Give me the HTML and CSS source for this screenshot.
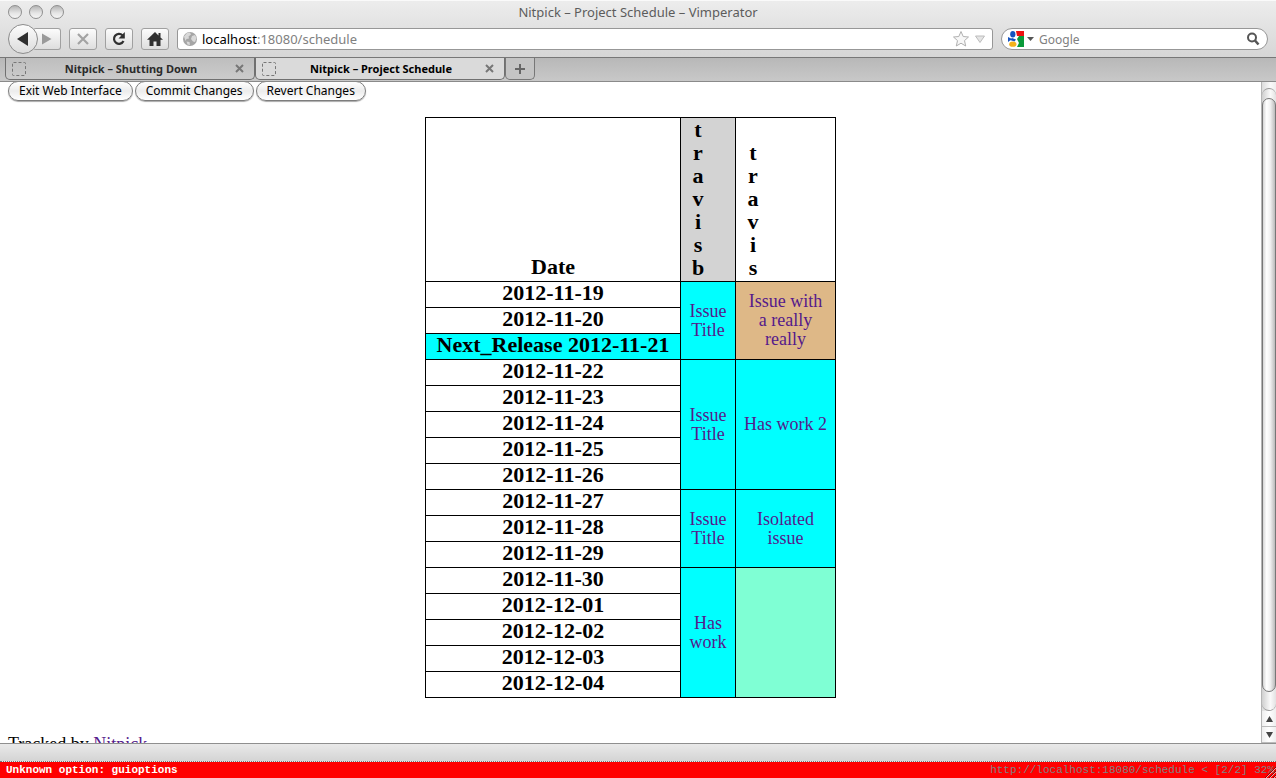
FILE: index.html
```html
<!DOCTYPE html>
<html lang="en">
<head>
<meta charset="utf-8">
<title>Nitpick – Project Schedule</title>
<link rel="stylesheet" href="styles.css">
</head>
<body>
<header class="chrome">
  <div class="titlebar">
    <div class="lights">
      <button class="light" aria-label="Close window"></button>
      <button class="light" aria-label="Minimize window"></button>
      <button class="light" aria-label="Zoom window"></button>
    </div>
    <div class="window-title">Nitpick – Project Schedule – Vimperator</div>
  </div>
  <div class="toolbar">
    <div class="history">
      <button class="back" aria-label="Back"><svg width="14" height="16" viewBox="0 0 14 16"><path d="M1 8 12 1v14z" fill="#2e2e2e"/></svg></button>
      <button class="tool forward" aria-label="Forward"><svg width="10" height="12" viewBox="0 0 10 12"><path d="M9.500 6 0 .500v11z" fill="#9a9a9a"/></svg></button>
    </div>
    <button class="tool" aria-label="Stop"><svg width="14" height="14" viewBox="0 0 14 14"><path d="M2 2l10 10M12 2 2 12" stroke="#a3a3a3" stroke-width="2.200" fill="none"/></svg></button>
    <button class="tool" aria-label="Reload"><svg width="16" height="16" viewBox="0 0 16 16"><path d="M11.500 4.200A5 5 0 1 0 12.500 10" stroke="#303030" stroke-width="2.200" fill="none"/><path d="M13.800 1v6.500H7.500z" fill="#303030"/></svg></button>
    <button class="tool" aria-label="Home"><svg width="18" height="16" viewBox="0 0 18 16"><path d="M9 1 1 8.800h2.500V15h4v-4.500h3V15h4V8.800H17L14.500 6.400V2h-2v2.400z" fill="#303030"/></svg></button>
    <div class="location">
      <svg width="16" height="16" viewBox="0 0 16 16"><circle cx="8" cy="8" r="7" fill="#a5a5a5"/><path d="M2 5.500 5 2l3-.5 1 2-2.500 2 .5 2-2.500.5-1 2zM10 5l3-1 1.500 3-1.500 4-2-.5L9 8zM4.500 10.500l3 .5.5 3-2.500-.5z" fill="#d9d9d9"/></svg>
      <div class="url" role="textbox" aria-label="Location" contenteditable="true" spellcheck="false">localhost<span class="path">:18080/schedule</span></div>
      <button class="bare" aria-label="Bookmark this page"><svg width="18" height="18" viewBox="0 0 18 18"><path d="M9 1.500l2.200 5 5.300.5-4 3.600 1.200 5.400L9 13.200 4.300 16l1.200-5.400-4-3.600 5.300-.5z" fill="#f7f7f7" stroke="#b0b0b0"/></svg></button>
      <button class="bare" aria-label="Show history"><svg width="12" height="10" viewBox="0 0 12 10"><path d="M1.500 2h9L6 8.500z" fill="#e5e5e5" stroke="#bcbcbc"/></svg></button>
    </div>
    <div class="search">
      <button class="bare engine" aria-label="Choose search engine">
        <svg width="16" height="16" viewBox="0 0 16 16"><path d="M0 0h16v16H0z" fill="#fff"/><path d="M8 0h8v5H9z" fill="#e11"/><path d="M11 5h5v11H9l2-4-2-4z" fill="#0a9a3a"/><path d="M0 6l4 2-4 3z" fill="#1553c0"/><ellipse cx="4.800" cy="3.200" rx="2.600" ry="3.200" fill="#1553c0"/><path d="M4 7l4 1.500-1.500 2L2 9z" fill="#1553c0"/><ellipse cx="4.800" cy="13.200" rx="3.600" ry="2.600" fill="#f5b21a"/></svg>
        <svg width="7" height="5" viewBox="0 0 7 5"><path d="M0 0h7L3.500 4z" fill="#555"/></svg>
      </button>
      <input class="query" type="text" placeholder="Google" aria-label="Search with Google">
      <button class="bare" aria-label="Search"><svg width="14" height="14" viewBox="0 0 14 14"><circle cx="6" cy="5.500" r="4" fill="none" stroke="#555" stroke-width="2"/><path d="M9 8.500l3.500 4" stroke="#555" stroke-width="2.500"/></svg></button>
    </div>
  </div>
  <nav class="tabs" aria-label="Tabs">
    <div class="tab">
      <svg width="16" height="16" viewBox="0 0 16 16"><rect x="1.500" y="1.500" width="13" height="13" rx="1" fill="none" stroke="#777" stroke-dasharray="3 2"/></svg>
      <a class="tab-label" href="#">Nitpick – Shutting Down</a>
      <button class="bare" aria-label="Close tab"><svg width="9" height="9" viewBox="0 0 9 9"><path d="M1 1l7 7M8 1 1 8" stroke="#777" stroke-width="2"/></svg></button>
    </div>
    <div class="tab active">
      <svg width="16" height="16" viewBox="0 0 16 16"><rect x="1.500" y="1.500" width="13" height="13" rx="1" fill="none" stroke="#777" stroke-dasharray="3 2"/></svg>
      <a class="tab-label" href="#">Nitpick – Project Schedule</a>
      <button class="bare" aria-label="Close tab"><svg width="9" height="9" viewBox="0 0 9 9"><path d="M1 1l7 7M8 1 1 8" stroke="#777" stroke-width="2"/></svg></button>
    </div>
    <button class="new-tab" aria-label="New tab"><svg width="12" height="12" viewBox="0 0 12 12"><path d="M6 1v10M1 6h10" stroke="#666" stroke-width="2"/></svg></button>
  </nav>
</header>

<div class="viewport">
  <main class="page">
    <div class="actions">
      <button class="action">Exit Web Interface</button>
      <button class="action">Commit Changes</button>
      <button class="action">Revert Changes</button>
    </div>
    <table class="schedule">
      <thead>
        <tr><th class="date">Date</th><th class="user current"><span>t<br>r<br>a<br>v<br>i<br>s<br>b</span></th><th class="user wide"><span>t<br>r<br>a<br>v<br>i<br>s</span></th></tr>
      </thead>
      <tbody>
        <tr><th>2012-11-19</th><td class="work" rowspan="3"><a href="#">Issue Title</a></td><td class="late" rowspan="3"><a href="#">Issue with a really really</a></td></tr>
        <tr><th>2012-11-20</th></tr>
        <tr><th class="release">Next_Release 2012-11-21</th></tr>
        <tr><th>2012-11-22</th><td class="work" rowspan="5"><a href="#">Issue Title</a></td><td class="work" rowspan="5"><a href="#">Has work 2</a></td></tr>
        <tr><th>2012-11-23</th></tr>
        <tr><th>2012-11-24</th></tr>
        <tr><th>2012-11-25</th></tr>
        <tr><th>2012-11-26</th></tr>
        <tr><th>2012-11-27</th><td class="work" rowspan="3"><a href="#">Issue Title</a></td><td class="work" rowspan="3"><a href="#">Isolated issue</a></td></tr>
        <tr><th>2012-11-28</th></tr>
        <tr><th>2012-11-29</th></tr>
        <tr><th>2012-11-30</th><td class="work" rowspan="5"><a href="#">Has work</a></td><td class="free" rowspan="5"></td></tr>
        <tr><th>2012-12-01</th></tr>
        <tr><th>2012-12-02</th></tr>
        <tr><th>2012-12-03</th></tr>
        <tr><th>2012-12-04</th></tr>
      </tbody>
    </table>
    <p class="credit">Tracked by <a href="#">Nitpick</a></p>
  </main>
  <div class="scrollbar">
    <div class="track"><div class="thumb"></div></div>
    <button class="arrow" aria-label="Scroll up"><svg width="7" height="6" viewBox="0 0 7 6"><path d="M0 6h7L3.500 0z" fill="#444"/></svg></button>
    <button class="arrow" aria-label="Scroll down"><svg width="7" height="6" viewBox="0 0 7 6"><path d="M0 0h7L3.500 6z" fill="#444"/></svg></button>
  </div>
</div>

<footer>
  <div class="addon-bar"></div>
  <div class="status">
    <span class="message">Unknown option: guioptions</span>
    <span class="position">http://localhost:18080/schedule &lt; [2/2] 32%</span>
    <svg class="grip" width="12" height="12" viewBox="0 0 12 12"><path d="M1 12 12 1M5 12l7-7M9 12l3-3" stroke="#7a1010"/><path d="M2 12 12 2M6 12l6-6M10 12l2-2" stroke="#ff9a9a"/></svg>
  </div>
</footer>
</body>
</html>
```
FILE: styles.css
```css
* { box-sizing: border-box; }

body {
  margin: 0;
  height: 100vh;
  display: flex;
  flex-direction: column;
  overflow: hidden;
  background: #fff;
  font-family: "Noto Sans", sans-serif;
  font-size: 12px;
}

button { padding: 0; font: inherit; color: inherit; }
svg { display: block; flex: none; }

/* Window chrome */
.chrome { flex: none; background: linear-gradient(#ededed, #d6d6d6 57px); }

.titlebar {
  display: grid;
  grid-template-columns: 1fr auto 1fr;
  align-items: center;
  height: 23px;
  padding: 0 8px;
  border-top: 1px solid #fafafa;
}
.lights { display: flex; gap: 7px; }
.light {
  width: 14px;
  height: 14px;
  border: 1px solid #8f8f8f;
  border-radius: 50%;
  background: linear-gradient(#b5b5b5, #e6e6e6 60%, #f5f5f5);
}
.window-title { color: #5c5c5c; line-height: 20px; font-size: 13px; }

.toolbar {
  display: flex;
  align-items: center;
  gap: 8px;
  height: 34px;
  padding: 0 8px 2px;
}
.history { display: flex; align-items: center; }
.back {
  display: grid;
  place-items: center;
  width: 30px;
  height: 30px;
  border: 1px solid #8c8c8c;
  border-radius: 50%;
  background: linear-gradient(#fcfcfc, #dcdcdc);
  z-index: 1;
}
.tool {
  display: grid;
  place-items: center;
  width: 28px;
  height: 22px;
  border: 1px solid #a0a0a0;
  border-radius: 3px;
  background: linear-gradient(#fcfcfc, #dedede);
}
.forward { margin-left: -5px; border-left: 0; }
.bare { display: flex; align-items: center; border: 0; background: none; }

.location, .search {
  display: flex;
  align-items: center;
  height: 22px;
  border: 1px solid #979797;
  background: #fff;
}
.location { flex: 1; gap: 4px; padding: 0 6px 0 4px; border-radius: 3px; }
.url { flex: 1; outline: 0; font-size: 13px; line-height: 20px; color: #000; }
.path { color: #808080; }
.search { width: 267px; padding: 0 7px 0 6px; border-radius: 11px; }
.engine { gap: 3px; }
.query {
  flex: 1;
  min-width: 0;
  padding: 0 0 0 5px;
  border: 0;
  outline: 0;
  background: none;
  font: inherit;
}
.query::placeholder { color: #808080; opacity: 1; }

.tabs {
  display: flex;
  height: 25px;
  padding: 0 0 1px 5px;
  border-top: 1px solid #777;
  border-bottom: 1px solid #8a8a8a;
  background: linear-gradient(#b8b8b8, #c8c8c8);
}
.tab {
  display: flex;
  align-items: center;
  width: 250px;
  padding: 0 10px 0 5px;
  border: 1px solid #707070;
  border-top: 0;
  border-radius: 0 0 5px 5px;
  background: linear-gradient(#bebebe, #cbcbcb);
}
.tab.active { background: #dadada; }
.tab-label {
  flex: 1;
  text-align: center;
  font-size: 11px;
  font-weight: 700;
  color: #2b2b2b;
  text-decoration: none;
}
.active .tab-label { color: #000; }
.new-tab {
  display: grid;
  place-items: center;
  width: 30px;
  border: 1px solid #777;
  border-top: 0;
  border-radius: 0 0 5px 5px;
  background: #c4c4c4;
}

/* Web page */
.viewport { flex: 1; min-height: 0; display: flex; }
.page {
  flex: 1;
  min-width: 0;
  overflow: hidden;
  padding: 0 8px;
  font-family: "Liberation Serif", "Times New Roman", serif;
  font-size: 18px;
}
.actions { display: flex; gap: 2px; margin-top: -1px; }
.action {
  height: 20px;
  padding: 0 10px;
  border: 1px solid #7d7d7d;
  border-radius: 10px;
  background: linear-gradient(#fff, #ececec 50%, #fff);
  box-shadow: 0 1px 1px #aaa;
  font: 12px/18px "Noto Sans", sans-serif;
  color: #000;
}

.schedule {
  margin: 16px auto 0;
  border-collapse: collapse;
  text-align: center;
}
.schedule th, .schedule td { border: 1px solid #000; }
.schedule th { padding: 0 10px 4px; font-size: 22px; line-height: 21px; vertical-align: bottom; }
.schedule td { padding: 1px 8px; line-height: 19px; }
.date { width: 255px; }
.schedule .user { width: 55px; padding: 0 11px 2px; line-height: 23px; text-align: left; }
.schedule .wide { width: 100px; }
.user span { display: block; width: 12px; text-align: center; }
.current { background: #d3d3d3; }
.work, .release { background: #0ff; }
.late { background: #deb887; }
.free { background: #7fffd4; }
.page a { color: #551a8b; text-decoration: none; }
.credit { margin: 36px 0 0; line-height: 20px; }
.page .credit a { text-decoration: underline; }

/* Scrollbar */
.scrollbar {
  display: flex;
  flex-direction: column;
  width: 15px;
  border-left: 1px solid #b5b5b5;
  background: linear-gradient(90deg, #dcdcdc, #fafafa 60%, #eee);
}
.track {
  flex: 1;
  display: flex;
  margin-top: 6px;
  padding: 9px 0 18px;
  border-top: 1px solid #999;
  border-bottom: 1px solid #999;
  border-radius: 7px;
  background: linear-gradient(90deg, #cfcfcf, #fafafa 60%, #e2e2e2);
}
.thumb {
  flex: 1;
  border: 1px solid #777;
  border-radius: 7px;
  background: linear-gradient(90deg, #d5d5d5, #fff 30%, #f2f2f2 60%, #bbb);
}
.arrow {
  display: grid;
  place-items: center;
  height: 16px;
  border: 0;
  border-bottom: 1px solid #bbb;
  background: linear-gradient(90deg, #eee, #fff 50%, #eee);
}

/* Bottom bars */
footer { flex: none; }
.addon-bar {
  height: 19px;
  border-top: 1px solid #8f8f8f;
  border-bottom: 1px dotted #777;
  background: linear-gradient(#e9e9e9, #d4d4d4);
}
.status {
  position: relative;
  display: flex;
  justify-content: space-between;
  padding: 0 2px 0 6px;
  background: #f00;
  font: 11px/16px "Liberation Mono", monospace;
}
.message { font-weight: 700; color: #fff; }
.position { color: #808080; }
.grip { position: absolute; right: 0; bottom: 0; }
```
